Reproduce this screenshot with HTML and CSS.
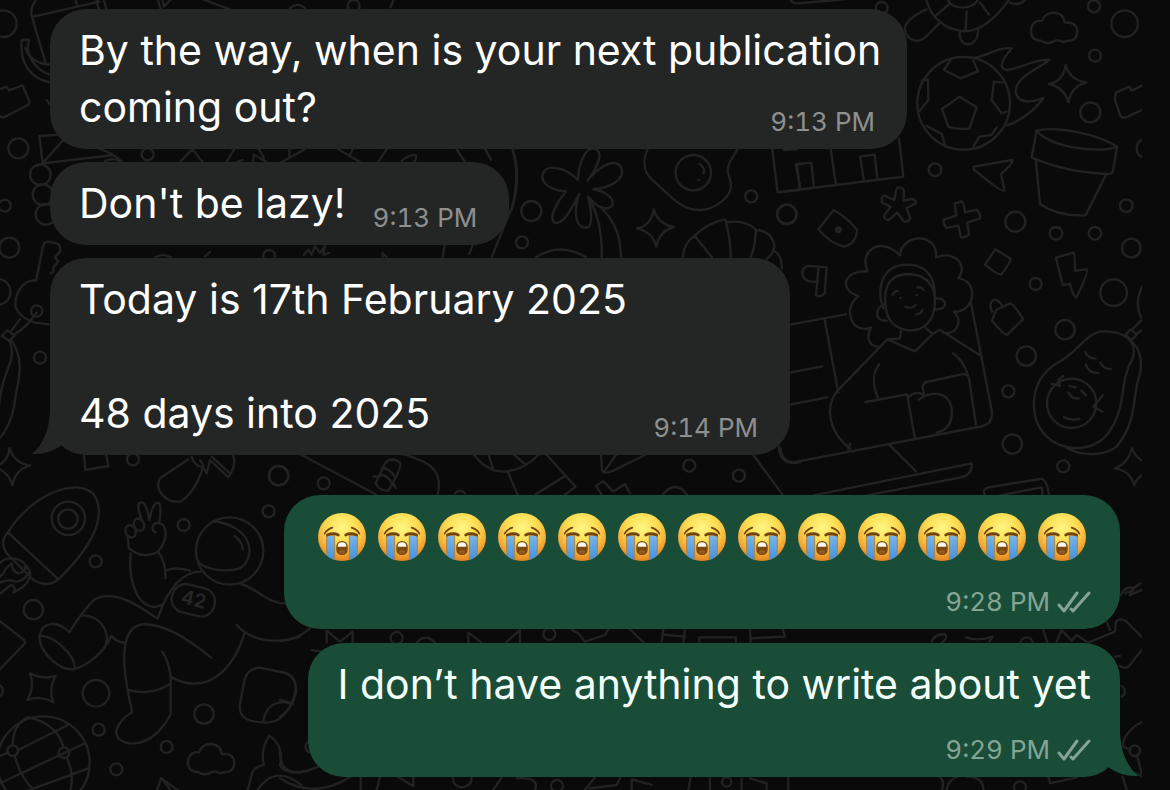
FILE: index.html
```
<!DOCTYPE html>
<html lang="en">
<head>
    <meta charset="UTF-8">
    <meta name="viewport" content="width=device-width, initial-scale=1">
    <title>Chat</title>
    <link rel="stylesheet" href="styles.css">
</head>
<body>
    <!-- shared shapes -->
    <svg class="defs" aria-hidden="true">
        <defs>
            <radialGradient id="face" cx="50%" cy="30%" r="72%">
                <stop offset="0" stop-color="#fff684"/>
                <stop offset="0.45" stop-color="#fcdc50"/>
                <stop offset="0.75" stop-color="#f3aa36"/>
                <stop offset="1" stop-color="#df7f1c"/>
            </radialGradient>
            <linearGradient id="tear" x1="0" y1="0" x2="0" y2="1">
                <stop offset="0" stop-color="#7cb4e8"/>
                <stop offset="1" stop-color="#3f8fdc"/>
            </linearGradient>
            <clipPath id="round"><circle cx="72" cy="72" r="72"/></clipPath>
            <symbol id="crying" viewBox="0 0 144 144">
                <circle cx="72" cy="72" r="72" fill="url(#face)"/>
                <g clip-path="url(#round)" fill="url(#tear)" stroke="#a9853f" stroke-width="3">
                    <path d="M26 67h24v80H26z"/>
                    <path d="M94 67h24v80H94z"/>
                </g>
                <g fill="none" stroke="#74420d" stroke-linecap="round">
                    <path stroke-width="5" d="M20 62Q27 49 43 44M124 62Q117 49 101 44"/>
                    <path stroke-width="8" d="M28 66Q46 58 61 66M83 66Q98 58 116 66"/>
                </g>
                <rect x="55" y="84" width="34" height="42" rx="16" fill="#79470f"/>
                <path d="M59 101Q59 88 72 88T85 101z" fill="#fffdf2"/>
                <ellipse cx="72" cy="117" rx="10" ry="5" fill="#936020"/>
            </symbol>
            <symbol id="ticks" viewBox="0 0 34 22">
                <path d="M2 14L7 20L20 2M14 18L16 20L32 2" fill="none" stroke="currentColor" stroke-width="3" stroke-linecap="round" stroke-linejoin="round"/>
            </symbol>
            <symbol id="tail" viewBox="0 0 30 44">
                <path d="M18 0Q17 28 0 43Q16 44 30 34V0z" fill="currentColor"/>
            </symbol>
            <path id="sparkle" d="M-5 -56Q7 -12 57 -3Q13 7 3 56Q-8 12 -55 1Q-12 -7 -5 -56z"/>
            <path id="cloud" d="M-38 34Q-68 34 -68 4Q-66 -27 -34 -26Q-26 -50 2 -50Q30 -48 33 -20Q69 -24 71 7Q69 38 38 34Q30 42 20 34Q12 32 4 34Q-18 48 -38 34z"/>
        </defs>
    </svg>

    <svg class="wallpaper" viewBox="0 0 1142 790" aria-hidden="true">
        <!-- top left: bag, banana, grapes -->
        <g transform="scale(.3333)">
            <circle cx="10" cy="71" r="40"/>
            <path d="M137 190L94 44Q92 15 112 -5M100 50L298 5M226 -5L231 18M288 -5L297 30M310 -5L320 30"/>
            <path d="M152 247C92 238 58 190 65 120L87 119L83 144C88 180 112 212 150 224M76 144C88 175 114 192 150 194"/>
            <path d="M-5 268L20 261L27 271L67 256L88 302Q90 314 78 318L10 353L-5 347"/>
            <circle cx="55" cy="445" r="30"/>
            <path d="M185 404L118 408L128 490L190 420M128 490L340 465M113 497L128 490M300 447Q340 460 365 485M315 484Q340 470 360 485"/>
            <circle cx="121" cy="524" r="31"/><circle cx="129" cy="584" r="31"/><circle cx="138" cy="643" r="31"/>
            <circle cx="14" cy="617" r="18"/><circle cx="28" cy="743" r="30"/><circle cx="443" cy="463" r="18"/>
            <path d="M472 -5L483 30M486 -5L492 20L515 -5M600 -5L690 28M870 24Q893 4 915 24"/>
            <circle cx="1061" cy="18" r="18"/>
            <path d="M1172 22L1182 -5M140 300L160 325M155 345L163 375"/>
        </g>
        <!-- strips above and below the short message -->
        <g transform="translate(130 138) scale(.3333)">
            <path d="M150 72L187 34L218 72M290 72L312 34M320 72L338 66M368 72L372 50L410 72M386 32L402 60M478 34V55M455 72L525 34M625 34L690 72M660 50L668 34M745 72L770 34M815 70Q835 48 858 52Q860 66 848 78M980 34L1005 72M1066 34L1083 65M1148 34Q1172 120 1145 210L1085 358M945 320L938 358M1028 320L1018 348M75 358Q98 345 122 358M225 355L240 342M400 358Q398 338 417 336Q437 338 435 358M522 350L535 335L545 350L555 325L570 345L585 325L580 350L598 345M758 358V345L770 358"/>
        </g>
        <!-- palm, fried egg, shell -->
        <g transform="translate(500 140) scale(.3333)">
            <circle cx="94" cy="213" r="30"/><circle cx="66" cy="307" r="18"/>
            <path d="M234 120C235 75 255 25 278 26C315 28 298 75 262 122C310 65 350 58 364 83C378 120 325 146 280 147C325 158 347 180 335 198C320 215 290 202 265 170C275 215 280 264 258 263C222 262 222 205 238 162C215 205 190 256 165 248C140 235 180 175 198 154C155 151 121 131 128 103C140 70 195 80 234 120z"/>
            <path d="M265 170Q308 245 305 352M307 207Q362 260 363 352M108 352Q180 305 258 352"/>
            <path d="M443 27C423 70 435 105 466 128C510 165 540 210 599 210C645 208 700 170 692 128C688 105 675 93 690 66L713 27"/>
            <circle cx="580" cy="98" r="53"/><path d="M598 72Q616 82 611 101M595 121L598 120"/>
            <use href="#sparkle" x="466" y="264"/>
            <circle cx="754" cy="169" r="18"/><circle cx="860" cy="223" r="29"/>
            <path d="M549 352Q550 310 584 287Q620 250 675 238L680 247Q735 238 770 270Q820 275 823 320Q818 345 800 357M584 287L636 352M678 245Q692 300 692 352M768 268Q766 320 752 352M823 333Q845 345 846 385"/>
            <path d="M817 27L833 157L900 150L891 72H905M38 27Q65 110 35 210"/>
        </g>
        <!-- top right: turtle, ball, pot -->
        <g transform="translate(780 0) scale(.3333)">
            <path d="M30 -5Q35 12 55 10L200 -3"/><circle cx="305" cy="24" r="18"/>
            <path d="M438 -5C450 50 495 92 555 94C610 92 655 45 690 -5M503 -5C508 32 585 32 595 -5M468 46L508 12M600 8L627 44M560 35L557 92M440 28C405 42 370 70 375 90C385 125 415 132 440 108L480 68M540 94C535 125 555 136 570 132C592 125 594 105 595 82M690 8Q720 20 740 -5"/>
            <use href="#cloud" x="821" y="88"/>
            <circle cx="942" cy="19" r="18"/><circle cx="1034" cy="71" r="40"/><circle cx="945" cy="167" r="18"/>
            <circle cx="551" cy="310" r="139"/>
            <path d="M539 290L590 322L568 386Q530 389 505 380L486 327zM511 182L492 210L541 235L594 214L580 182M642 245L668 248M642 245L635 300L665 340L680 335M428 240L444 238L445 300L420 332M440 378L486 403L495 435M650 382L635 405L598 410L580 440"/>
            <path d="M582 174C630 165 655 140 696 145C670 175 650 205 682 210C725 205 765 175 808 180C780 205 705 230 707 276C715 320 770 302 790 294C765 330 720 365 680 376"/>
            <use href="#sparkle" x="862" y="251"/>
            <circle cx="931" cy="337" r="30"/>
            <path d="M1090 255L1055 272L1048 260L1008 278L1004 295L1020 345Q1025 355 1038 352L1090 328M1090 418A29 29 0 0 0 1090 473"/>
            <path d="M770 392C830 378 945 400 1012 440L998 515Q994 524 980 522Q850 515 755 472zM770 392Q800 430 900 445Q975 455 1012 440M768 485L780 612Q835 650 917 646L978 524"/>
            <path d="M581 500L698 480Q700 490 663 522L674 572Q665 578 581 508z"/>
            <circle cx="465" cy="509" r="19"/>
            <path d="M12 450L50 448M152 447L167 550M357 415L370 530L0 576M61 567L48 493L94 488L102 562M252 542L240 470L284 464L292 538"/>
            <path d="M358 562Q372 563 372 575L371 602L397 597Q408 600 407 610L380 625L391 655Q380 670 371 664L352 638L325 661Q310 657 313 646L332 620L306 608Q302 590 314 587L343 600L348 572Q350 562 358 562z"/>
            <path d="M524 611L545 604Q552 605 555 637L590 629Q602 640 600 655L562 668L567 704Q553 715 543 712L535 677L500 684Q488 670 492 658L529 647z"/>
            <path d="M161 630L115 688Q150 730 192 740Q230 730 231 690Q205 655 161 630z"/><circle cx="175" cy="689" r="7" fill="#222"/>
            <circle cx="21" cy="643" r="29"/><circle cx="706" cy="665" r="30"/><circle cx="1039" cy="617" r="19"/><circle cx="828" cy="700" r="19"/><circle cx="945" cy="700" r="19"/>
        </g>
        <!-- right: laptop with a portrait, avocado -->
        <g transform="translate(780 240) scale(.3333)">
            <path d="M140 82L134 160Q122 175 108 165L112 125Q70 130 67 98Q68 78 90 78zM112 125L115 84"/>
            <path d="M295 320C265 320 258 290 273 262C225 285 180 215 235 168C175 150 190 90 263 94C235 35 300 -15 360 46C365 -20 475 -25 468 52C525 30 565 75 535 115C595 120 590 215 522 216C550 245 530 285 490 278"/>
            <path d="M310 205C290 160 298 75 380 74C455 75 468 130 464 185"/>
            <path d="M317 200C308 140 330 102 388 102C445 105 468 145 465 190C462 245 430 272 388 271C350 268 320 245 317 200zM315 192C285 200 280 245 320 242M467 176C500 170 508 210 468 208"/>
            <path d="M338 165Q342 153 354 153M412 142Q425 140 431 150M361 174L362 174M410 165L411 165M376 200Q395 208 408 195M427 210Q425 222 408 223"/>
            <path d="M363 272L360 295L322 298L405 334L458 282L438 265M458 282L480 269L603 348M322 298L170 455C135 500 145 580 212 626M298 373C275 400 280 440 293 472M518 340Q555 362 570 430M257 486L381 463L405 596M387 470Q410 450 430 465M416 479C450 455 500 450 514 500C520 535 510 570 470 578M433 470L428 440Q430 428 440 426L545 403Q562 400 567 415L588 553M205 628L210 612"/>
            <path d="M30 254L198 223M573 190L635 510Q640 550 610 558L40 667Q5 665 2 625M134 240L175 458M30 398L126 379M30 494L142 472M330 616L408 694M100 766L575 670Q578 705 540 713L260 766M615 766Q605 748 625 742L780 717Q800 712 807 766M660 766L785 742L788 766"/>
            <path d="M646 28L692 56Q694 64 663 104Q652 104 615 74zM828 53L880 38Q885 40 885 92L920 88Q928 92 890 172Q882 175 870 132L848 135z"/>
            <path d="M648 210L690 190Q702 192 729 238L682 284Q672 285 636 242zM636 215C620 180 650 165 667 198"/>
            <circle cx="1054" cy="24" r="28"/><circle cx="767" cy="132" r="18"/><circle cx="1001" cy="158" r="40"/><circle cx="855" cy="269" r="29"/><circle cx="739" cy="348" r="29"/><circle cx="685" cy="454" r="18"/><circle cx="697" cy="612" r="29"/><circle cx="850" cy="679" r="18"/>
            <path d="M960 275C1030 268 1075 305 1058 355C1015 430 1045 490 985 580C935 640 850 635 800 590C740 530 750 420 830 370C890 340 915 285 960 275zM1055 305C1080 325 1088 365 1080 400C1055 470 1075 540 1010 620C970 650 905 648 862 625M1036 285L1052 268L1070 285L1055 300zM1060 265L1087 238Q1060 195 1087 138M1072 280L1087 270"/>
            <circle cx="875" cy="490" r="74"/>
            <path d="M916 336Q925 357 947 355M918 374Q925 400 956 399M962 368Q970 388 992 387M815 432L840 438L835 420L850 408M968 466L940 500L967 515M868 438L888 442M904 452L918 466M866 458Q875 478 896 475M852 532Q870 542 898 537"/>
            <path d="M1087 662Q1065 650 1056 625Q1045 670 1005 685Q1050 692 1063 735Q1072 712 1087 705"/>
        </g>
        <!-- left edge: key and balloon -->
        <g transform="translate(0 240) scale(.3333)">
            <path d="M108 122L130 15Q135 3 150 6L170 10Q185 18 180 35L165 52L175 65L160 82L160 95L152 100M108 122C75 118 45 150 46 200Q60 235 105 248L150 253"/>
            <circle cx="110" cy="213" r="17"/><circle cx="120" cy="353" r="18"/>
            <path d="M-10 117A34 34 0 0 1 -5 195M110 218L85 250Q65 270 40 285M60 238L32 275M5 288L22 271L44 287L28 302zM28 302C55 370 5 380 -3 500M35 302C80 370 50 430 42 500Q30 560 -5 600"/>
        </g>
        <!-- rocket, astronaut, globe -->
        <g transform="translate(0 440) scale(.3333)">
            <use href="#sparkle" x="34" y="80"/>
            <path d="M252 45L256 90L326 78L318 45"/><circle cx="399" cy="58" r="18"/><circle cx="836" cy="107" r="29"/><circle cx="806" cy="214" r="18"/><circle cx="551" cy="255" r="18"/>
            <path d="M565 58L480 115C460 150 500 190 540 185C570 170 600 120 608 80M575 50Q585 82 608 80L620 100L630 60L685 112Q710 80 700 45M635 50L690 100M600 60L610 75"/>
            <path d="M22 280C70 200 160 140 230 142C290 145 305 190 292 250C275 310 225 370 175 418Q145 445 100 420L25 345Q-5 310 22 280zM27 280L175 418"/>
            <circle cx="205" cy="235" r="50"/><circle cx="204" cy="237" r="29"/><circle cx="287" cy="364" r="18"/><circle cx="100" cy="509" r="29"/>
            <path d="M-5 375C10 350 60 345 80 380Q105 405 70 440L40 458Q50 440 32 435L-5 465M-5 415L10 400Q15 385 35 370Q35 395 55 400Q80 395 75 380M-5 430Q25 415 45 425Q70 425 85 400M-5 540L72 600Q78 608 70 615L0 688"/>
            <path d="M383 292L387 325Q430 360 474 335Q510 290 490 255Q465 240 458 260Q458 275 467 277M425 240Q405 185 425 187Q440 190 448 240Q460 180 478 190Q485 200 478 248"/>
            <ellipse cx="417" cy="254" rx="15" ry="19" transform="rotate(-25 417 254)"/><ellipse cx="392" cy="274" rx="15" ry="19" transform="rotate(-25 392 274)"/>
            <path d="M392 340C385 410 405 490 455 500Q470 502 484 495M474 335Q500 370 496 415M500 390Q530 380 570 392"/>
            <circle cx="689" cy="333" r="101"/>
            <path d="M592 358C600 385 670 400 720 385C770 350 760 260 640 243M703 288Q725 300 729 329M604 394C550 395 505 440 473 536C420 500 350 450 290 475Q265 490 208 576C170 540 125 545 118 590C120 640 180 695 225 687C265 675 310 640 334 587Q350 607 375 608M248 527C295 525 330 570 318 612M120 588C155 585 225 640 225 687"/>
            <path d="M720 432C770 440 800 495 865 490M710 555C750 600 820 615 900 590M733 580C700 690 620 770 510 710M633 653C570 600 490 550 425 553C385 560 370 600 373 670Q376 730 397 817C370 830 335 870 355 895C400 930 470 905 512 823V710Q505 660 487 635M386 750C420 762 470 758 508 733"/>
            <rect x="515" y="438" width="130" height="86" rx="40" transform="rotate(14 580 481)"/>
            <text x="543" y="498" transform="rotate(14 580 481)">42</text>
            <path d="M90 700Q128 720 167 708Q145 745 160 787Q120 765 82 780Q105 740 90 700z"/>
            <circle cx="288" cy="760" r="40"/><circle cx="612" cy="822" r="29"/><circle cx="296" cy="869" r="18"/><circle cx="500" cy="921" r="18"/><circle cx="349" cy="988" r="18"/><path d="M-5 735A18 18 0 0 1 -5 770"/>
            <path d="M780 683L860 700Q890 715 888 750C875 800 850 850 795 848C735 845 715 830 720 790L735 715Q745 685 780 683zM790 845C795 800 830 775 880 792"/>
            <circle cx="130" cy="968" r="139"/>
            <path d="M38 915Q40 850 85 832Q170 850 190 920M55 930L208 853M-5 950L25 938M0 1030L250 912M45 950Q60 1010 105 1055M75 1055L265 985M200 955Q225 1000 210 1055"/>
            <circle cx="38" cy="932" r="16"/><circle cx="192" cy="938" r="16"/>
            <use href="#cloud" x="632" y="962"/>
            <path d="M740 1055C760 1020 740 985 792 975Q780 930 808 887C850 915 845 960 840 975Q850 1000 905 997M770 1055Q820 970 905 1035M470 1055L483 1015L540 1055M490 1020L515 1055"/>
        </g>
        <!-- strip between incoming and outgoing -->
        <g transform="translate(280 440) scale(.3333)">
            <circle cx="-4" cy="107" r="29"/><circle cx="131" cy="130" r="18"/>
            <path d="M55 40L290 164M365 42C450 65 490 90 473 164M287 130L315 70Q335 48 360 68Q368 80 325 152Q300 155 287 130zM305 85Q325 82 345 110M300 105Q325 105 335 130M280 110L300 108M340 130L347 145M525 160Q540 145 555 160"/>
            <path d="M580 42Q620 95 672 95Q730 92 778 42M625 42L638 82M700 42L735 72M683 95L713 164M798 42L887 140L855 164M765 164L855 108M963 42L966 90Q970 105 1000 92L1095 45M975 92L1010 42M965 164L948 138L970 124L1000 155L1035 132L1050 160M1148 164Q1185 118 1222 164M1418 42L1508 164M1497 20Q1500 80 1560 66"/>
            <circle cx="1228" cy="77" r="18"/><circle cx="1377" cy="107" r="18"/>
        </g>
        <!-- strips around the last message -->
        <g transform="translate(280 620) scale(.3333)">
            <path d="M0 63Q50 60 90 25M0 155Q50 160 48 220Q35 270 0 290M0 240L35 250M140 68V32L180 65L218 35V68M95 90L130 95M410 68Q437 38 465 68M565 68V38L605 68M680 65L720 30V68M875 30L895 40L915 65L975 45L985 28M1050 28L1090 66M1145 65L1150 28M1150 44L1215 50M1210 68L1215 28M1258 68V52H1368V66M1412 66L1410 28M1412 55L1515 50L1508 28"/>
            <circle cx="350" cy="54" r="18"/><circle cx="808" cy="42" r="18"/>
            <path d="M85 365A18 18 0 0 0 88 397M0 400C0 460 50 470 115 440M0 475Q100 540 210 472M242 472V510M290 510L300 472M355 472L400 498V472M518 472Q520 500 545 502Q575 500 575 472M640 510L665 472M710 475Q780 470 765 510M915 510L945 472M930 505L1010 495L1020 475M1055 510V478L1115 495M1225 510L1232 472M1290 510V475M1385 510V475M1410 475L1460 490V510M1525 510V472"/>
            <circle cx="831" cy="498" r="18"/><circle cx="1340" cy="486" r="14"/>
        </g>
        <g transform="translate(930 580) scale(.3333)">
            <path d="M572 45Q590 15 610 25L632 10M585 40L610 30L600 45L640 28M5 185Q15 160 45 163Q55 175 35 188M108 172Q145 185 188 170L178 185M340 150L352 188M380 185L395 150L425 182L440 165L475 188L555 155L558 125Q570 110 590 125L640 175M530 125L540 150M640 205L595 260Q585 268 570 258M555 230L570 228M575 318A18 18 0 0 1 575 350M640 425C600 440 575 480 580 500L602 510M622 530L635 580M578 590L590 630M605 575L640 590M355 590L360 610L440 592M30 590Q45 605 35 630M50 630C55 590 100 580 110 590C150 590 160 610 160 630"/>
            <circle cx="614" cy="512" r="16"/><circle cx="290" cy="190" r="18"/><circle cx="270" cy="622" r="18"/>
        </g>
    </svg>

    <main class="chat">
        <article class="message incoming overlap long">
            <p>By the way, when is your next publication coming out?</p>
            <time>9:13 PM</time>
        </article>
        <article class="message incoming inline">
            <p>Don't be lazy!</p>
            <time>9:13 PM</time>
        </article>
        <article class="message incoming overlap dated">
            <p>Today is 17th February 2025<br><br>48 days into 2025</p>
            <time>9:14 PM</time>
            <svg class="tail" aria-hidden="true"><use href="#tail"/></svg>
        </article>
        <article class="message outgoing first">
            <div class="emojis" role="img" aria-label="Loudly crying faces">
                <svg><use href="#crying"/></svg>
                <svg><use href="#crying"/></svg>
                <svg><use href="#crying"/></svg>
                <svg><use href="#crying"/></svg>
                <svg><use href="#crying"/></svg>
                <svg><use href="#crying"/></svg>
                <svg><use href="#crying"/></svg>
                <svg><use href="#crying"/></svg>
                <svg><use href="#crying"/></svg>
                <svg><use href="#crying"/></svg>
                <svg><use href="#crying"/></svg>
                <svg><use href="#crying"/></svg>
                <svg><use href="#crying"/></svg>
            </div>
            <div class="status">
                <time>9:28 PM</time>
                <svg class="ticks" role="img" aria-label="Delivered"><use href="#ticks"/></svg>
            </div>
        </article>
        <article class="message outgoing">
            <p>I don’t have anything to write about yet</p>
            <div class="status">
                <time>9:29 PM</time>
                <svg class="ticks" role="img" aria-label="Delivered"><use href="#ticks"/></svg>
            </div>
            <svg class="tail" aria-hidden="true"><use href="#tail"/></svg>
        </article>
    </main>
</body>
</html>
```
FILE: styles.css
```
* {
    box-sizing: border-box;
}

body {
    margin: 0;
    min-height: 100vh;
    position: relative;
    overflow-x: hidden;
    background-color: #0a0a0a;
    color: #fff;
    font-family: Inter, "Liberation Sans", sans-serif;
}

.defs {
    position: absolute;
    width: 0;
    height: 0;
}

.wallpaper {
    position: absolute;
    top: 0;
    left: 0;
    width: 1142px;
    height: 790px;
    overflow: hidden;
    fill: none;
    stroke: #222;
    stroke-width: 7;
    stroke-linecap: round;
    stroke-linejoin: round;
}

.wallpaper text {
    font-size: 58px;
    stroke: none;
    fill: #262626;
    font-weight: 600;
}

.chat {
    position: relative;
    display: flex;
    flex-direction: column;
    align-items: flex-start;
    gap: 13px;
    padding: 9px 50px 13px;
}

.message {
    position: relative;
    max-width: 100%;
    padding: 13px 29px 11px;
    border-radius: 36px;
}

.message p {
    margin: 0 0 2px;
    font-size: 41px;
    line-height: 57px;
}

.message time {
    font-size: 26px;
    line-height: 32px;
    font-variant-numeric: tabular-nums;
    white-space: nowrap;
}

.incoming {
    background-color: #242625;
    color: #242625;
}

.incoming p {
    color: #fff;
}

.incoming time {
    margin-right: 3px;
    color: #8e8f8f;
}

/* the time sits on the last line of the text */
.overlap {
    display: grid;
}

.overlap p,
.overlap time {
    grid-area: 1 / 1;
}

.overlap time {
    align-self: end;
    justify-self: end;
}

.inline {
    display: flex;
    align-items: flex-end;
    gap: 27px;
}

.long {
    max-width: 857px;
}

/* a full line may run closer to the edge than the time does */
.long p {
    margin-right: -20px;
}

.dated {
    min-width: 740px;
}

.outgoing {
    display: flex;
    flex-direction: column;
    gap: 19px;
    align-self: flex-end;
    background-color: #194d38;
    color: #194d38;
}

.outgoing p {
    color: #f4fff9;
}

.first {
    margin: 27px 0 1px;
}

.emojis {
    display: flex;
    flex-wrap: wrap;
    align-items: center;
    gap: 12px;
    min-height: 57px;
    margin: 0 5px 2px;
}

.emojis svg {
    width: 48px;
    height: 48px;
}

.status {
    display: flex;
    align-items: center;
    justify-content: flex-end;
    gap: 7px;
    color: #84a594;
}

.ticks {
    width: 34px;
    height: 22px;
}

.tail {
    position: absolute;
    bottom: 0;
    left: -18px;
    width: 30px;
    height: 44px;
}

.outgoing .tail {
    left: auto;
    right: -18px;
    transform: scaleX(-1);
}
```
